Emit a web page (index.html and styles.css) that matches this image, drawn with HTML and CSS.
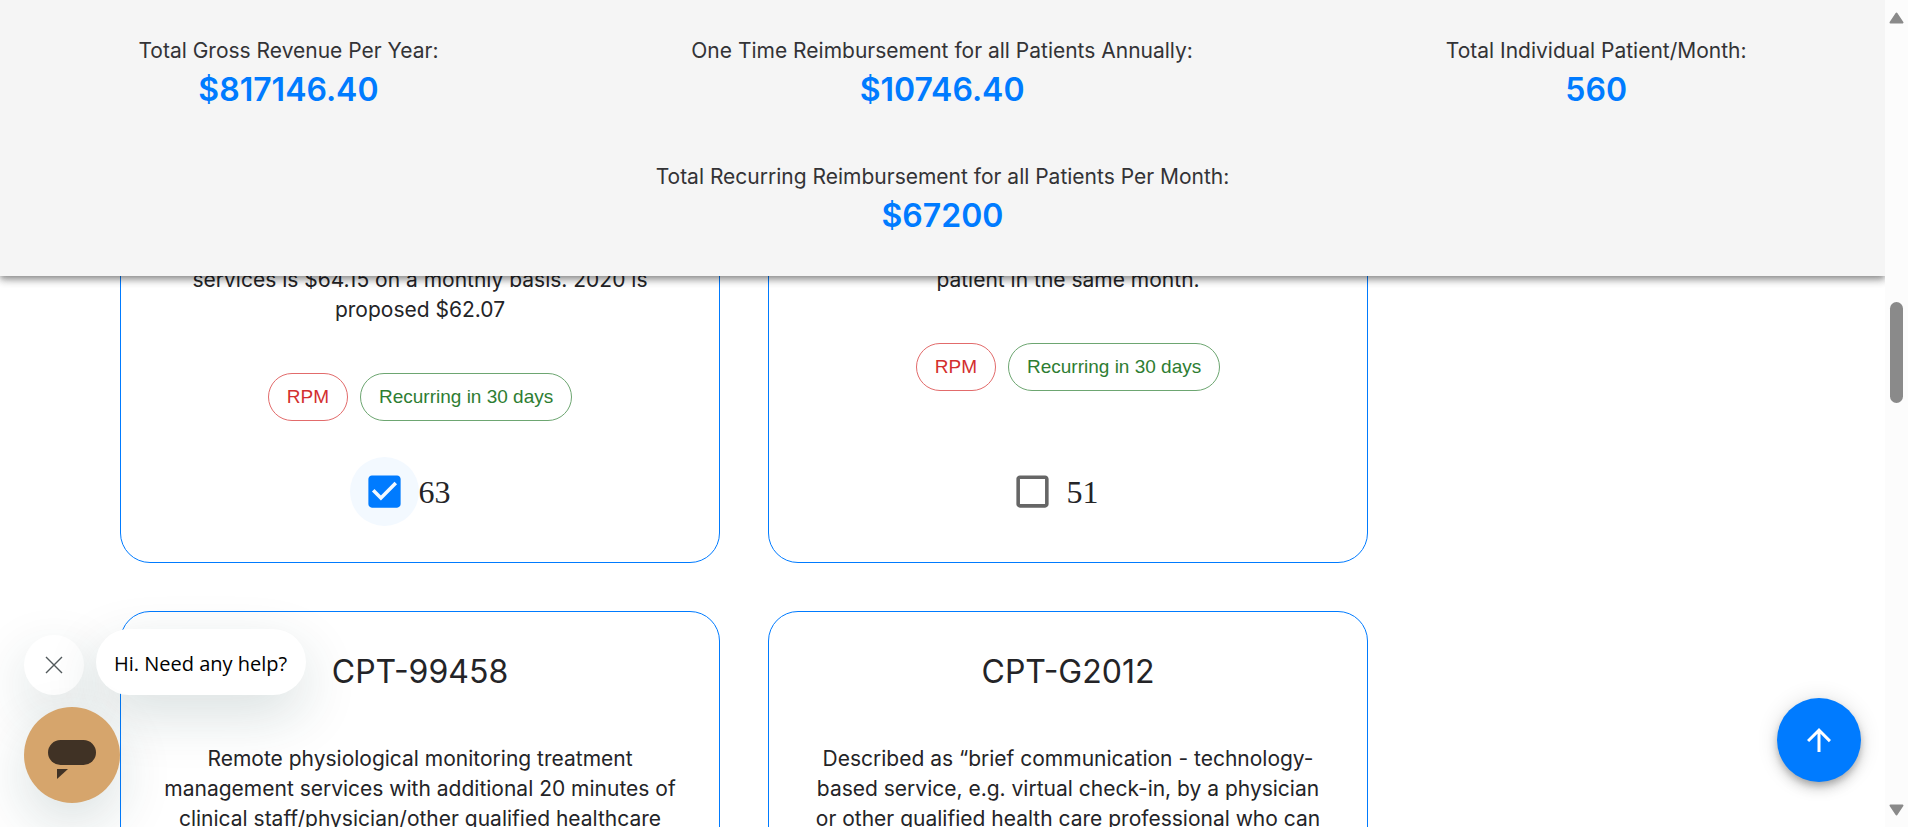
FILE: index.html
```html
<!DOCTYPE html>
<html lang="en">
<head>
<meta charset="utf-8">
<title>Reimbursement Calculator</title>
<link rel="stylesheet" href="styles.css">
</head>
<body>
<div class="viewport">
  <div class="page">
    <header class="summary">
      <div class="stat"><p class="stat-label">Total Gross Revenue Per Year:</p><p class="stat-value">$817146.40</p></div>
      <div class="stat"><p class="stat-label">One Time Reimbursement for all Patients Annually:</p><p class="stat-value">$10746.40</p></div>
      <div class="stat"><p class="stat-label">Total Individual Patient/Month:</p><p class="stat-value">560</p></div>
      <div class="stat"><p class="stat-label">Total Recurring Reimbursement for all Patients Per Month:</p><p class="stat-value">$67200</p></div>
    </header>

    <main class="codes">
      <div class="card-grid">
        <article class="card">
          <p class="card-text">services is $64.15 on a monthly basis. 2020 is<br>proposed $62.07</p>
          <div class="chips"><span class="chip chip-red">RPM</span><span class="chip chip-green">Recurring in 30 days</span></div>
          <label class="pick">
            <span class="pick-box pick-box-focus">
              <input type="checkbox" checked>
              <svg viewBox="0 0 24 24" aria-hidden="true"><path d="M19 3H5c-1.11 0-2 .9-2 2v14c0 1.1.89 2 2 2h14c1.11 0 2-.9 2-2V5c0-1.1-.89-2-2-2zm-9 14l-5-5 1.41-1.41L10 14.17l7.59-7.59L19 8l-9 9z"/></svg>
            </span>
            <span class="pick-count">63</span>
          </label>
        </article>
        <article class="card">
          <p class="card-text">patient in the same month.</p>
          <div class="chips"><span class="chip chip-red">RPM</span><span class="chip chip-green">Recurring in 30 days</span></div>
          <label class="pick">
            <span class="pick-box">
              <input type="checkbox">
              <svg viewBox="0 0 24 24" aria-hidden="true"><path d="M19 5v14H5V5h14m0-2H5c-1.1 0-2 .9-2 2v14c0 1.1.9 2 2 2h14c1.1 0 2-.9 2-2V5c0-1.1-.9-2-2-2z"/></svg>
            </span>
            <span class="pick-count">51</span>
          </label>
        </article>
        <article class="card">
          <h2 class="card-title">CPT-99458</h2>
          <p class="card-text">Remote physiological monitoring treatment management services with additional 20 minutes of clinical staff/physician/other qualified healthcare</p>
        </article>
        <article class="card">
          <h2 class="card-title">CPT-G2012</h2>
          <p class="card-text">Described as “brief communication - technology-based service, e.g. virtual check-in, by a physician or other qualified health care professional who can</p>
        </article>
      </div>
    </main>

    <aside class="chat">
      <div class="chat-prompt">
        <button class="chat-close" type="button" aria-label="Close">
          <svg viewBox="0 0 18 18" aria-hidden="true"><path d="M1 1l16 16M17 1L1 17"/></svg>
        </button>
        <button class="chat-bubble" type="button">Hi. Need any help?</button>
      </div>
      <button class="chat-launcher" type="button" aria-label="Open chat">
        <svg viewBox="0 0 48 40" aria-hidden="true"><rect width="48" height="25" rx="12.5"/><path d="M9 29h11l-11 10z"/></svg>
      </button>
    </aside>

    <button class="to-top" type="button" aria-label="Back to top">
      <svg viewBox="0 0 24 24" aria-hidden="true"><path d="M4 12l1.41 1.41L11 7.83V20h2V7.83l5.58 5.59L20 12l-8-8-8 8z"/></svg>
    </button>
  </div>

  <div class="scrollbar" aria-hidden="true">
    <svg class="scroll-arrow" viewBox="0 0 15 12"><path d="M7.500 1.500L13.500 10.500H1.500z"/></svg>
    <span class="scroll-before"></span>
    <span class="scroll-thumb"></span>
    <span class="scroll-after"></span>
    <svg class="scroll-arrow" viewBox="0 0 15 12"><path d="M7.500 10.500L13.500 1.500H1.500z"/></svg>
  </div>
</div>
</body>
</html>
```
FILE: styles.css
```css
* { box-sizing: border-box; }

body {
  margin: 0;
  background: #fff;
  color: #242427;
  font-family: Inter, "Liberation Sans", sans-serif;
}

p, h2 { margin: 0; }
button { border: 0; padding: 0; cursor: pointer; }

.viewport {
  display: grid;
  grid-template-columns: minmax(0, 1fr) 23px;
  height: 100vh;
  overflow: hidden;
}

.page {
  position: relative;
  display: flex;
  flex-direction: column;
  min-height: 0;
  overflow: hidden;
}

/* Summary bar */
.summary {
  position: relative;
  z-index: 1;
  display: flex;
  flex: none;
  flex-wrap: wrap;
  justify-content: space-around;
  padding: 12px;
  background: #f5f5f5;
  box-shadow: 0 2px 5px -1px rgba(0, 0, 0, .2), 0 5px 6px rgba(0, 0, 0, .14), 0 1px 12px rgba(0, 0, 0, .12), 0 2px 10px rgba(0, 0, 0, .2);
}

.stat {
  padding: 24px 36px;
  text-align: center;
}

.stat-label {
  color: #333336;
  font-size: 21px;
  font-weight: 400;
  line-height: 30px;
}

.stat-value {
  color: #007bff;
  font-size: 32px;
  font-weight: 600;
  line-height: 48px;
}

/* Code cards */
.codes {
  flex: 1;
  min-height: 0;
  overflow: hidden;
}

.card-grid {
  display: grid;
  grid-template-columns: repeat(2, minmax(0, 600px));
  gap: 48px;
  margin-top: -48px;
  padding: 0 120px;
}

.card {
  display: flex;
  flex-direction: column;
  align-items: center;
  padding: 36px;
  border: 1px solid #007bff;
  border-radius: 30px;
  text-align: center;
}

.card-title {
  margin-bottom: 48px;
  font-size: 32px;
  font-weight: 400;
  line-height: 48px;
}

.card-text {
  font-size: 21px;
  font-weight: 400;
  line-height: 30px;
}

.chips {
  display: flex;
  gap: 12px;
  margin-top: 48px;
}

.chip {
  padding: 0 18px;
  border: 1px solid;
  border-radius: 24px;
  font-family: "Liberation Sans", Arial, sans-serif;
  font-size: 19px;
  line-height: 46px;
}

.chip-red { border-color: #e26b6b; color: #d32f2f; }
.chip-green { border-color: #6da671; color: #2e7d32; }

.pick {
  display: flex;
  align-items: center;
  margin: auto 40px 0 0;
  padding-top: 36px;
  cursor: pointer;
}

.pick-box {
  display: grid;
  width: 69px;
  height: 69px;
  border-radius: 50%;
  place-items: center;
  fill: #666;
}

.pick-box-focus {
  background: #f3f9ff;
  fill: #007bff;
}

.pick-box > * { grid-area: 1 / 1; }

.pick-box input {
  width: 32px;
  height: 32px;
  margin: 0;
  opacity: 0;
}

.pick-box svg { width: 43px; height: 43px; }

.pick-count {
  font-family: "Liberation Serif", "Times New Roman", serif;
  font-size: 32px;
  line-height: 36px;
}

/* Chat widget */
.chat {
  position: absolute;
  bottom: 24px;
  left: 24px;
  z-index: 2;
  display: flex;
  flex-direction: column;
  gap: 12px;
}

.chat-prompt {
  display: flex;
  align-items: flex-end;
  gap: 12px;
}

.chat-close,
.chat-bubble {
  background: #fff;
  box-shadow: 0 20px 56px rgba(20, 62, 64, .16);
}

.chat-close {
  display: grid;
  width: 60px;
  height: 60px;
  border-radius: 50%;
  place-items: center;
}

.chat-close svg {
  width: 18px;
  height: 18px;
  fill: none;
  stroke: #52595c;
  stroke-width: 1.4;
}

.chat-bubble {
  padding: 20px 19px 16px 18px;
  border-radius: 34px;
  color: #000;
  font-family: "Open Sans", "Noto Sans", sans-serif;
  font-size: 20px;
  line-height: 30px;
}

.chat-launcher {
  display: grid;
  width: 96px;
  height: 96px;
  border-radius: 50%;
  background: #d6a56c;
  box-shadow: 0 20px 56px rgba(20, 62, 64, .16);
  place-items: center;
}

.chat-launcher svg {
  width: 48px;
  height: 40px;
  margin-top: 10px;
  fill: #403225;
}

/* Back to top */
.to-top {
  position: absolute;
  right: 24px;
  bottom: 45px;
  z-index: 2;
  display: grid;
  width: 84px;
  height: 84px;
  border-radius: 50%;
  background: #007bff;
  box-shadow: 0 4px 6px -1px rgba(0, 0, 0, .2), 0 7px 12px rgba(0, 0, 0, .14), 0 1px 22px rgba(0, 0, 0, .12);
  place-items: center;
}

.to-top svg { width: 36px; height: 36px; fill: #fff; }

/* Scrollbar */
.scrollbar {
  display: flex;
  flex-direction: column;
  align-items: center;
  padding: 12px 0 11px;
  background: #fcfcfc;
}

.scroll-arrow {
  width: 15px;
  height: 12px;
  fill: #8a8a8a;
  stroke: #8a8a8a;
  stroke-width: 2;
  stroke-linejoin: round;
}

.scroll-before { flex: 278; }
.scroll-after { flex: 401; }

.scroll-thumb {
  width: 13px;
  height: 101px;
  border-radius: 7px;
  background: #8a8a8a;
}
```
